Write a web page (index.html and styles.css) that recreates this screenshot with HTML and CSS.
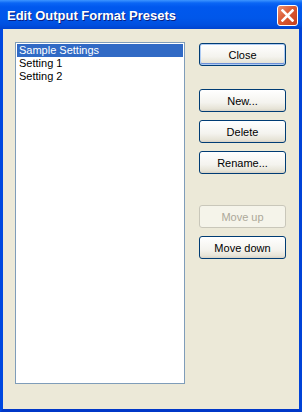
FILE: index.html
```html
<!DOCTYPE html>
<html lang="en">
<head>
    <meta charset="UTF-8">
    <meta name="viewport" content="width=device-width, initial-scale=1.0">
    <title>Edit Output Format Presets</title>
    <link rel="stylesheet" href="styles.css">
</head>
<body>
    <div class="window">
        <div class="titlebar">
            <span class="title">Edit Output Format Presets</span>
            <button class="closeX" aria-label="Close">
                <svg width="13" height="13" viewBox="0 0 13 13">
                    <path d="M1.5 1.5 L11.5 11.5 M11.5 1.5 L1.5 11.5" stroke="#fff" stroke-width="2.6" stroke-linecap="square"/>
                </svg>
            </button>
        </div>
        <div class="client">
            <div class="listbox">
                <div class="item selected">Sample Settings</div>
                <div class="item">Setting 1</div>
                <div class="item">Setting 2</div>
            </div>
            <div class="buttons">
                <button class="btn default">Close</button>
                <button class="btn gapTop">New...</button>
                <button class="btn">Delete</button>
                <button class="btn">Rename...</button>
                <button class="btn gapTop2" disabled>Move up</button>
                <button class="btn">Move down</button>
            </div>
        </div>
    </div>
</body>
</html>
```

FILE: styles.css
```css
body {
    margin: 0;
    background-color: #ece9d8;
    font-family: Tahoma, "Liberation Sans", Arial, sans-serif;
}

.window {
    width: 302px;
    height: 412px;
    display: flex;
    flex-direction: column;
}

.titlebar {
    height: 29px;
    flex-shrink: 0;
    display: flex;
    align-items: center;
    justify-content: space-between;
    padding: 0 4px 0 7px;
    box-sizing: border-box;
    background: linear-gradient(#3d95ff 0px, #0a66f5 3px, #0058ee 7px, #0057ea 18px, #004fdf 25px, #0043cf 29px);
}

.title {
    color: white;
    font-family: "Liberation Sans", Arial, sans-serif;
    font-weight: bold;
    font-size: 13px;
    text-shadow: 1px 1px 0 #0a1f80;
    margin-top: 1px;
}

.closeX {
    width: 21px;
    height: 21px;
    padding: 0;
    border: 1px solid #fff;
    border-radius: 3px;
    background: linear-gradient(135deg, #ee9270 0%, #da5a34 45%, #c63f1d 100%);
    display: flex;
    align-items: center;
    justify-content: center;
    margin-top: 2px;
}

.client {
    flex: 1;
    display: flex;
    align-items: flex-start;
    padding: 13px 0 0 12px;
    border-left: 3px solid #0048e0;
    border-right: 3px solid #0043d8;
    border-bottom: 3px solid #0038c8;
}

.listbox {
    width: 170px;
    height: 342px;
    box-sizing: border-box;
    border: 1px solid #7f9db9;
    background-color: white;
    padding: 1px;
}

.item {
    height: 13px;
    line-height: 13px;
    font-size: 11px;
    padding-left: 2px;
    color: black;
}

.selected {
    background-color: #316ac5;
    color: white;
}

.buttons {
    display: flex;
    flex-direction: column;
    margin-left: 14px;
    padding-top: 1px;
}

.btn {
    width: 87px;
    height: 23px;
    margin-bottom: 8px;
    border: 1px solid #003c74;
    border-radius: 3px;
    background: linear-gradient(#ffffff 0%, #f4f3ee 60%, #e6e3d6 90%, #d6d0c5 100%);
    font-family: Tahoma, "Liberation Sans", Arial, sans-serif;
    font-size: 11px;
    color: black;
    padding: 0;
}

.default {
    box-shadow: inset 0 0 0 1px #aecbf3, inset 0 -1px 0 1px #6c8fd8;
}

.gapTop {
    margin-top: 15px;
}

.gapTop2 {
    margin-top: 23px;
}

.btn:disabled {
    border-color: #c9c7ba;
    background: #f5f4ea;
    color: #aca899;
}
```
